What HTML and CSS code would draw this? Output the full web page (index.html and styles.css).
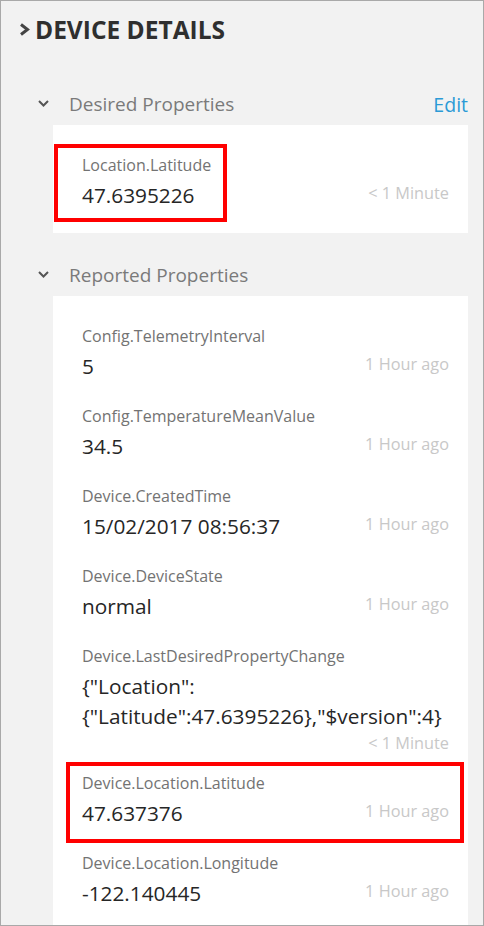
FILE: index.html
```html
<!DOCTYPE html>
<html>
<head>
<meta charset="utf-8">
<link rel="stylesheet" href="styles.css">
</head>
<body>
<div class="panel">
  <div class="title">
    <svg class="title-chev" width="11" height="13" viewBox="0 0 11 13"><polyline points="2,1.5 8.5,6.5 2,11.5" fill="none" stroke="#444" stroke-width="3"/></svg>
    <span>DEVICE DETAILS</span>
  </div>

  <div class="section-head">
    <svg class="chev" width="11" height="7" viewBox="0 0 11 7"><polyline points="1,1 5.5,5.5 10,1" fill="none" stroke="#555" stroke-width="2"/></svg>
    <span class="section-name">Desired Properties</span>
    <span class="edit">Edit</span>
  </div>
  <div class="card card-desired">
    <div class="item mark mark-a">
      <div class="label">Location.Latitude</div>
      <div class="row"><span class="value">47.6395226</span><span class="time">&lt; 1 Minute</span></div>
    </div>
  </div>

  <div class="section-head">
    <svg class="chev" width="11" height="7" viewBox="0 0 11 7"><polyline points="1,1 5.5,5.5 10,1" fill="none" stroke="#555" stroke-width="2"/></svg>
    <span class="section-name">Reported Properties</span>
  </div>
  <div class="card card-reported">
    <div class="item">
      <div class="label">Config.TelemetryInterval</div>
      <div class="row"><span class="value">5</span><span class="time">1 Hour ago</span></div>
    </div>
    <div class="item">
      <div class="label">Config.TemperatureMeanValue</div>
      <div class="row"><span class="value">34.5</span><span class="time">1 Hour ago</span></div>
    </div>
    <div class="item">
      <div class="label">Device.CreatedTime</div>
      <div class="row"><span class="value">15/02/2017 08:56:37</span><span class="time">1 Hour ago</span></div>
    </div>
    <div class="item">
      <div class="label">Device.DeviceState</div>
      <div class="row"><span class="value">normal</span><span class="time">1 Hour ago</span></div>
    </div>
    <div class="item">
      <div class="label">Device.LastDesiredPropertyChange</div>
      <div class="row"><span class="value">{"Location":<br>{"Latitude":47.6395226},"$version":4}</span><span class="time time-below">&lt; 1 Minute</span></div>
    </div>
    <div class="item mark mark-b">
      <div class="label">Device.Location.Latitude</div>
      <div class="row"><span class="value">47.637376</span><span class="time">1 Hour ago</span></div>
    </div>
    <div class="item">
      <div class="label">Device.Location.Longitude</div>
      <div class="row"><span class="value">-122.140445</span><span class="time">1 Hour ago</span></div>
    </div>
  </div>
</div>
</body>
</html>
```

FILE: styles.css
```css
*, *::before, *::after { box-sizing: border-box; }
html, body {
  margin: 0;
  padding: 0;
  height: 100%;
  overflow: hidden;
}
body {
  font-family: "Open Sans", "Noto Sans", sans-serif;
  background: #f2f2f2;
}
.panel {
  height: 926px;
  border: 1px solid #a9a9a9;
  background: #f2f2f2;
  padding: 12px 15px 0 18px;
  overflow: hidden;
}
.title {
  display: flex;
  align-items: center;
  height: 32px;
  color: #2f2f2f;
  font-weight: 700;
  font-size: 24.5px;
}
.title-chev { margin-right: 5px; margin-top: 1px; }
.section-head {
  display: flex;
  align-items: center;
  height: 28px;
  margin: 45px 0 7px 19px;
  font-size: 19px;
  color: #7a7a7a;
}
.card-desired + .section-head { margin-top: 28px; }
.chev { margin-top: -2px; margin-right: 20px; flex: none; }
.section-name { flex: 1; }
.edit { color: #2b9ad6; font-size: 19.5px; }
.card {
  background: #fff;
  margin-left: 34px;
}
.card-desired { padding: 18px 0 10px; }
.card-reported { padding: 18px 0 40px; }
.item {
  position: relative;
  padding: 12px 19px 13px 29px;
}
.label {
  font-size: 16px;
  line-height: 20px;
  color: #737373;
}
.row {
  display: flex;
  flex-wrap: wrap;
  align-items: center;
  margin-top: 5px;
}
.value {
  font-size: 20.8px;
  line-height: 30px;
  color: #262626;
}
.time {
  margin-left: auto;
  margin-top: -4px;
  font-size: 16.3px;
  color: #c8c8c8;
}
.time-below {
  line-height: 24px;
  margin-top: 0;
  margin-bottom: -7px;
}
.mark::after {
  content: "";
  position: absolute;
  border: 4px solid #ff0000;
  pointer-events: none;
}
.mark-a::after { left: 1px; top: 1px; width: 173px; bottom: 1px; }
.mark-b::after { left: 13px; right: 4px; top: 1px; bottom: -2px; }
```
